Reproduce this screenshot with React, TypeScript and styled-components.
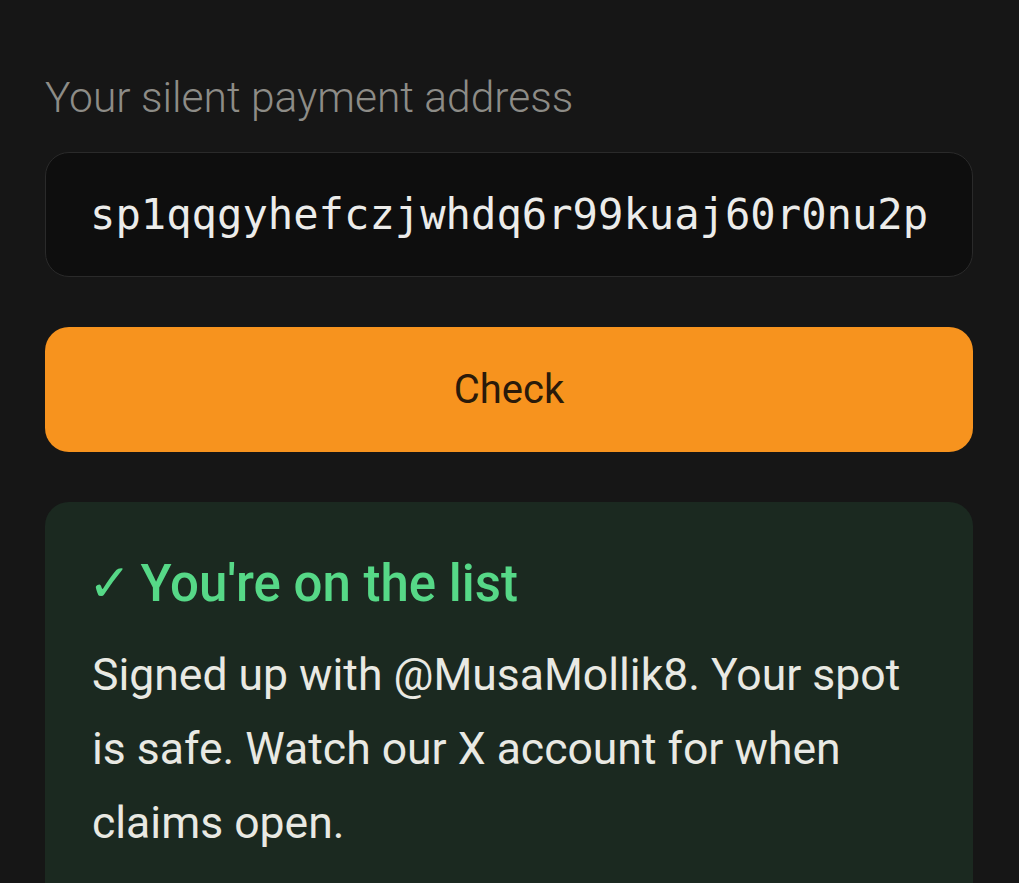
import React from 'react'
import styled, { createGlobalStyle } from 'styled-components'

const GlobalStyle = createGlobalStyle`
  html, body {
    margin: 0;
    padding: 0;
    background: #161616;
  }
  body {
    font-family: Roboto, "Liberation Sans", sans-serif;
    -webkit-font-smoothing: antialiased;
  }
`

const Page = styled.div`
  display: flex;
  flex-direction: column;
  padding: 74px 46px 0 45px;
  min-height: 883px;
  box-sizing: border-box;
`

const Label = styled.label`
  display: block;
  font-size: 42.5px;
  font-weight: 300;
  line-height: 48px;
  color: #8d8c87;
  margin-bottom: 30px;
`

const AddressField = styled.input`
  box-sizing: border-box;
  width: 100%;
  height: 125px;
  padding: 0 30px 0 44px;
  border-radius: 24px;
  border: 1.5px solid #2a2a2a;
  background: #0e0e0e;
  color: #ececea;
  font-family: "DejaVu Sans Mono", "Liberation Mono", monospace;
  font-size: 42.2px;
  outline: none;
`

const CheckButton = styled.button`
  margin-top: 50px;
  height: 125px;
  width: 100%;
  border: none;
  border-radius: 24px;
  background: #f7931e;
  color: #2a1a0a;
  font-family: Roboto, "Liberation Sans", sans-serif;
  font-size: 40px;
  font-weight: 400;
  cursor: pointer;
`

const ResultCard = styled.section`
  margin-top: 50px;
  padding: 55px 47px 60px 47px;
  border-radius: 24px;
  background: #1b2920;
  flex: 1;
`

const ResultTitle = styled.h2`
  margin: 0 0 28px;
  display: flex;
  align-items: baseline;
  gap: 9px;
  font-size: 51px;
  font-weight: 500;
  line-height: 53px;
  color: #56d887;
`

const Tick = styled.span`
  font-family: "DejaVu Sans", sans-serif;
  font-weight: 400;
  font-size: 52px;
  margin-left: -4px;
`

const ResultText = styled.p`
  margin: 0;
  max-width: 840px;
  font-size: 44.5px;
  font-weight: 400;
  line-height: 74px;
  color: #e9e9e3;
`

export default function App() {
  return (
    <>
      <GlobalStyle />
      <Page>
        <Label htmlFor="sp-address">Your silent payment address</Label>
        <AddressField
          id="sp-address"
          readOnly
          value="sp1qqgyhefczjwhdq6r99kuaj60r0nu2p"
        />
        <CheckButton>Check</CheckButton>
        <ResultCard>
          <ResultTitle>
            <Tick>✓</Tick>
            <span>You're on the list</span>
          </ResultTitle>
          <ResultText>
            Signed up with @MusaMollik8. Your spot is safe. Watch our X account for when claims open.
          </ResultText>
        </ResultCard>
      </Page>
    </>
  )
}
